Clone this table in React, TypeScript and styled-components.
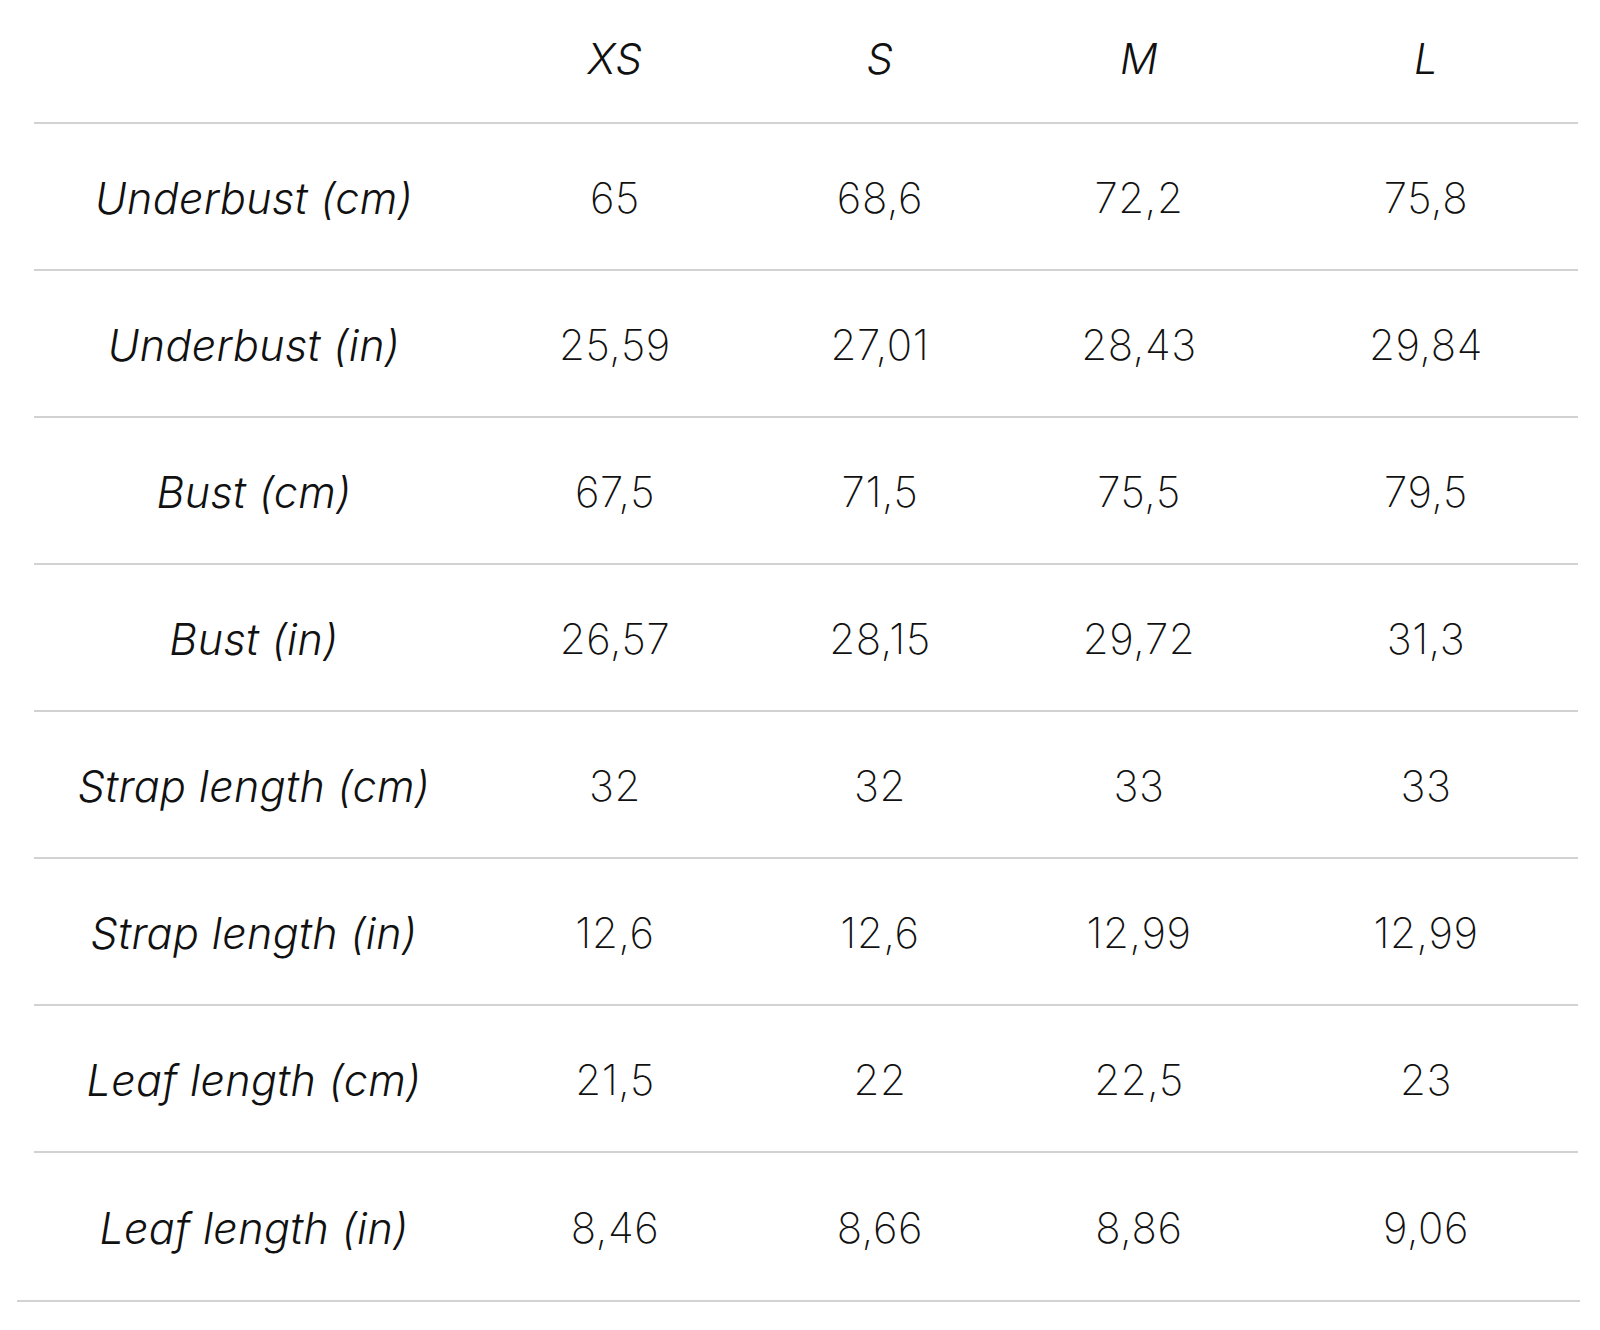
import React from "react";
import styled, { createGlobalStyle } from "styled-components";

const Global = createGlobalStyle`
  html, body { margin: 0; padding: 0; background: #ffffff; }
  body { font-family: "Inter", "Liberation Sans", sans-serif; color: #111111; }
`;

const Wrapper = styled.div`
  width: 1563px;
  margin-left: 17px;
  border-bottom: 2px solid #d2d2d2;
`;

const Table = styled.div`
  margin-left: 17px;
  width: 1544px;
  display: grid;
  grid-template-columns: 440px 282px 248px 270px 304px;
`;

const Cell = styled.div<{ $head?: boolean; $last?: boolean; $label?: boolean }>`
  box-sizing: border-box;
  height: ${(p) => (p.$head ? "124px" : "147px")};
  padding: ${(p) => (p.$head ? "0 0 6px" : "2px 0 0")};
  display: flex;
  align-items: center;
  justify-content: center;
  border-bottom: ${(p) => (p.$last ? "none" : "2px solid #d2d2d2")};
  font-family: "Inter", "Liberation Sans", sans-serif;
  font-size: ${(p) => (p.$label ? "43px" : "42px")};
  font-weight: ${(p) => (p.$label || p.$head ? 270 : 200)};
  letter-spacing: ${(p) => (p.$label || p.$head ? "0.4px" : "0.6px")};
  font-style: ${(p) => (p.$label || p.$head ? "italic" : "normal")};
  color: #111111;
  white-space: nowrap;
`;

const sizes = ["XS", "S", "M", "L"];

const rows: [string, string[]][] = [
  ["Underbust (cm)", ["65", "68,6", "72,2", "75,8"]],
  ["Underbust (in)", ["25,59", "27,01", "28,43", "29,84"]],
  ["Bust (cm)", ["67,5", "71,5", "75,5", "79,5"]],
  ["Bust (in)", ["26,57", "28,15", "29,72", "31,3"]],
  ["Strap length (cm)", ["32", "32", "33", "33"]],
  ["Strap length (in)", ["12,6", "12,6", "12,99", "12,99"]],
  ["Leaf length (cm)", ["21,5", "22", "22,5", "23"]],
  ["Leaf length (in)", ["8,46", "8,66", "8,86", "9,06"]],
];

export default function App() {
  return (
    <>
      <Global />
      <Wrapper>
        <Table>
          <Cell $head />
          {sizes.map((s) => (
            <Cell key={s} $head>
              {s}
            </Cell>
          ))}
          {rows.map(([label, vals], i) => {
            const last = i === rows.length - 1;
            return (
              <React.Fragment key={label}>
                <Cell $label $last={last}>
                  {label}
                </Cell>
                {vals.map((v, j) => (
                  <Cell key={j} $last={last}>
                    {v}
                  </Cell>
                ))}
              </React.Fragment>
            );
          })}
        </Table>
      </Wrapper>
    </>
  );
}
